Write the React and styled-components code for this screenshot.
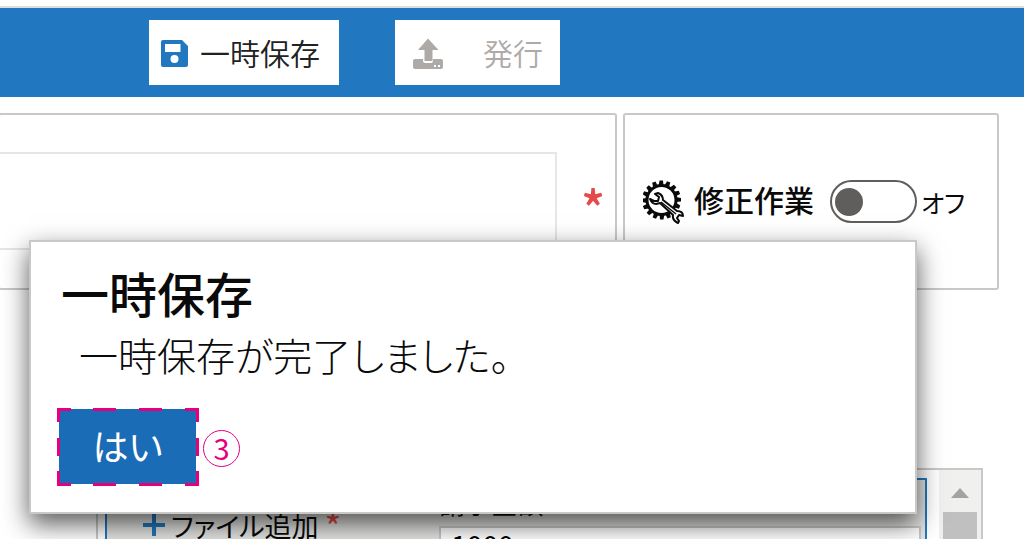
import React, { useState } from 'react';
import styled, { createGlobalStyle } from 'styled-components';

const teeth = Array.from({ length: 16 }, (_, i) => i * 22.5);

const SaveIcon = () => (
  <svg width="27" height="27" viewBox="0 0 27 27" aria-hidden="true">
    <path
      fill="#2178c0"
      fillRule="evenodd"
      d="M2 0H21L27 6V25Q27 27 25 27H2Q0 27 0 25V2Q0 0 2 0ZM4 4V12H19.500V4ZM13.500 15A4 4 0 1 0 13.500 23A4 4 0 1 0 13.500 15Z"
    />
  </svg>
);

const UploadIcon = () => (
  <svg width="30" height="31" viewBox="0 0 30 31" aria-hidden="true">
    <path
      fill="#aeaaa8"
      fillRule="evenodd"
      d="M2 21H10V23Q10 25 12 25H18Q20 25 20 23V21H28Q30 21 30 23V29Q30 31 28 31H2Q0 31 0 29V23Q0 21 2 21ZM21 27V29H23V27ZM25 27V29H27V27Z"
    />
    <path fill="#aeaaa8" d="M15 0.500L25.500 12H19.500V23H11.500V12H5Z" />
  </svg>
);

const GearIcon = () => (
  <svg width="41" height="44" viewBox="0 0 41 44" aria-hidden="true">
    <g fill="#0a0a0a">
      {teeth.map((angle) => (
        <path key={angle} transform={`rotate(${angle} 18.500 20)`} d="M15.500 6L16.500 0.500H20L20.500 6Z" />
      ))}
    </g>
    <circle cx="18.500" cy="20" r="14.500" fill="none" stroke="#0a0a0a" strokeWidth="3" />
    <path
      fill="#fff"
      stroke="#0a0a0a"
      strokeWidth="2"
      strokeLinejoin="round"
      d="M12 14L16 17L15 21L11 21L7 19Q9 24 13 24L17 23L30 35Q29 40 35 43L36 41L34 38L36 35L40 36Q40 31 34 31L20 20Q20 15 15 13Z"
    />
    <path stroke="#0a0a0a" strokeWidth="1.500" d="M18 22L33 34" />
  </svg>
);

const DashFrame = () => (
  <Dashes viewBox="0 0 142 78" aria-hidden="true">
    <path
      fill="none"
      stroke="#e4007f"
      strokeWidth="3"
      d="M1.500 14V1.500H14M36 1.500H59M82 1.500H105M128 1.500H140.500V14M140.500 30V48M140.500 63V76.500H128M105 76.500H82M59 76.500H36M14 76.500H1.500V63M1.500 48V30"
    />
  </Dashes>
);

const App = () => {
  const [fixing, setFixing] = useState(false);
  const [text, setText] = useState('');
  const [amount, setAmount] = useState('1000');
  const [open, setOpen] = useState(true);

  return (
    <Page>
      <GlobalStyle />
      <Toolbar>
        <ToolButton type="button" onClick={() => setOpen(true)}>
          <SaveIcon />
          <ButtonText>一時保存</ButtonText>
        </ToolButton>
        <ToolButton type="button" $wide disabled>
          <UploadIcon />
          <ButtonText>発行</ButtonText>
        </ToolButton>
      </Toolbar>

      <Panels>
        <FieldPanel>
          <Field aria-label="内容" value={text} onChange={(e) => setText(e.target.value)} required />
          <Required>*</Required>
        </FieldPanel>
        <ModePanel>
          <GearIcon />
          <ModeLabel htmlFor="fixing">修正作業</ModeLabel>
          <Switch
            id="fixing"
            type="checkbox"
            role="switch"
            checked={fixing}
            onChange={(e) => setFixing(e.target.checked)}
          />
          <ModeState>{fixing ? 'オン' : 'オフ'}</ModeState>
        </ModePanel>
      </Panels>

      <FileList>
        <FileCard>
          <AddFile type="button">
            <svg width="22" height="22" viewBox="0 0 22 22" aria-hidden="true">
              <path stroke="#2178c0" strokeWidth="4" d="M11 0V22M0 11H22" />
            </svg>
            ファイル追加
            <SmallRequired>*</SmallRequired>
          </AddFile>
          <AmountField>
            <label htmlFor="amount">請求金額</label>
            <input id="amount" value={amount} onChange={(e) => setAmount(e.target.value)} />
          </AmountField>
        </FileCard>
        <ScrollBar>
          <svg width="18" height="10" viewBox="0 0 18 10" aria-hidden="true">
            <path fill="#a3a3a3" d="M9 0L18 10H0Z" />
          </svg>
          <Thumb />
        </ScrollBar>
      </FileList>

      {open && (
        <Dialog role="dialog" aria-labelledby="dialog-title">
          <h2 id="dialog-title">一時保存</h2>
          <p>一時保存が完了しました。</p>
          <Actions>
            <Marked>
              <YesButton type="button" onClick={() => setOpen(false)}>
                はい
              </YesButton>
              <DashFrame />
            </Marked>
            <Step>3</Step>
          </Actions>
        </Dialog>
      )}
    </Page>
  );
};

const GlobalStyle = createGlobalStyle`
  * {
    box-sizing: border-box;
  }

  body {
    margin: 0;
    background: #fff;
  }

  body, button, input {
    font-family: 'Noto Sans CJK JP', sans-serif;
    font-feature-settings: 'palt';
  }
`;

const Page = styled.div`
  position: relative;
  height: 100vh;
  overflow: hidden;
  padding-top: 6px;
  color: #0a0a0a;
`;

const Toolbar = styled.header`
  display: flex;
  gap: 56px;
  padding: 12px 149px;
  border-top: 2px solid #e0dcd8;
  background: #2178c0;
`;

const ToolButton = styled.button`
  display: flex;
  align-items: center;
  gap: ${({ $wide }) => ($wide ? '40px' : '12px')};
  height: 65px;
  padding: ${({ $wide }) => ($wide ? '2px 17px 0 18px' : '2px 19px 0 12px')};
  border: none;
  background: #fff;
  color: #222;
  font-size: 30px;
  font-weight: 350;
  cursor: pointer;

  &:disabled {
    color: #aeaaa8;
    cursor: default;
  }
`;

const ButtonText = styled.span`
  padding-bottom: 4px;
`;

const Panels = styled.main`
  display: flex;
  gap: 6px;
  margin: 16px 25px 0 -2px;
`;

const Panel = styled.section`
  height: 177px;
  border: 2px solid #c8c8c6;
  border-radius: 3px;
`;

const FieldPanel = styled(Panel)`
  display: flex;
  flex: 1;
  align-items: center;
  gap: 24px;
  padding: 0 10px 2px 0;
`;

const Field = styled.input`
  flex: 1;
  min-width: 0;
  height: 98px;
  border: 2px solid #e6e6e8;
  border-left: none;
  background: #fff;
  font-size: 30px;
`;

const Required = styled.span`
  padding-top: 10px;
  color: #e74848;
  font-size: 50px;
  font-weight: 500;
  line-height: 48px;
`;

const ModePanel = styled(Panel)`
  display: flex;
  align-items: center;
  padding: 0 32px 0 18px;
`;

const ModeLabel = styled.label`
  margin: 0 16px 0 10px;
  padding-bottom: 5px;
  font-size: 30px;
  font-weight: 500;
`;

const ModeState = styled.span`
  font-size: 25px;
`;

const Switch = styled.input`
  appearance: none;
  display: flex;
  align-items: center;
  width: 87px;
  height: 43px;
  margin: 0 4px 0 0;
  padding: 0 3px;
  border: 2px solid #605e5c;
  border-radius: 22px;

  &::before {
    content: '';
    width: 28px;
    height: 28px;
    border-radius: 50%;
    background: #605e5c;
  }

  &:checked {
    justify-content: flex-end;
  }
`;

const FileList = styled.section`
  display: flex;
  height: 200px;
  margin: 178px 41px 0 96px;
  border: 2px solid #c8c8c6;
`;

const FileCard = styled.div`
  display: flex;
  flex: 1;
  gap: 98px;
  margin: 8px 12px 0 7px;
  padding: 0 4px 0 36px;
  border: 2px solid #2178c0;
  background: #e4e4e2;
`;

const AddFile = styled.button`
  display: flex;
  align-items: center;
  align-self: flex-start;
  height: 90px;
  gap: 6px;
  padding: 0;
  border: none;
  background: none;
  color: #0a0a0a;
  font-size: 27px;
  font-weight: 400;
`;

const SmallRequired = styled.span`
  color: #e74848;
  font-size: 36px;
`;

const AmountField = styled.div`
  display: flex;
  flex: 1;
  flex-direction: column;
  font-size: 26px;
  line-height: 46px;

  input {
    width: 100%;
    height: 36px;
    padding: 0 10px;
    border: 2px solid #c8c8c6;
    background: #fff;
    font-size: 28px;
    line-height: 32px;
  }
`;

const ScrollBar = styled.div`
  display: flex;
  flex-direction: column;
  align-items: center;
  gap: 14px;
  width: 42px;
  padding-top: 18px;
  background: #f0f0ee;
`;

const Thumb = styled.div`
  flex: 1;
  width: 34px;
  background: #c0c0c0;
`;

const Dialog = styled.div`
  position: absolute;
  top: 240px;
  left: 29px;
  right: 107px;
  padding: 18px 28px 28px;
  border: 2px solid #c8c8c6;
  background: #fff;
  box-shadow: 0 10px 24px rgba(0, 0, 0, 0.65);

  h2 {
    margin: 0;
    padding-left: 2px;
    font-size: 48px;
    font-weight: 500;
    line-height: 64px;
  }

  p {
    margin: 0;
    padding-left: 20px;
    font-size: 39px;
    font-weight: 300;
    line-height: 60px;
  }
`;

const Actions = styled.div`
  display: flex;
  align-items: center;
  gap: 7px;
  margin-top: 25px;
`;

const Marked = styled.div`
  position: relative;
  display: flex;
`;

const YesButton = styled.button`
  width: 137px;
  height: 75px;
  padding: 0 0 4px;
  border: none;
  background: #1a6cb7;
  color: #fff;
  font-size: 36px;
  cursor: pointer;
`;

const Dashes = styled.svg`
  position: absolute;
  top: -1px;
  left: -2px;
  width: 142px;
  height: 78px;
  pointer-events: none;
`;

const Step = styled.span`
  display: flex;
  align-items: center;
  justify-content: center;
  width: 37px;
  height: 37px;
  margin-top: 4px;
  padding-bottom: 3px;
  border: 1px solid #e4007f;
  border-radius: 50%;
  color: #e4007f;
  font-size: 29px;
  line-height: 34px;
`;

export default App;
